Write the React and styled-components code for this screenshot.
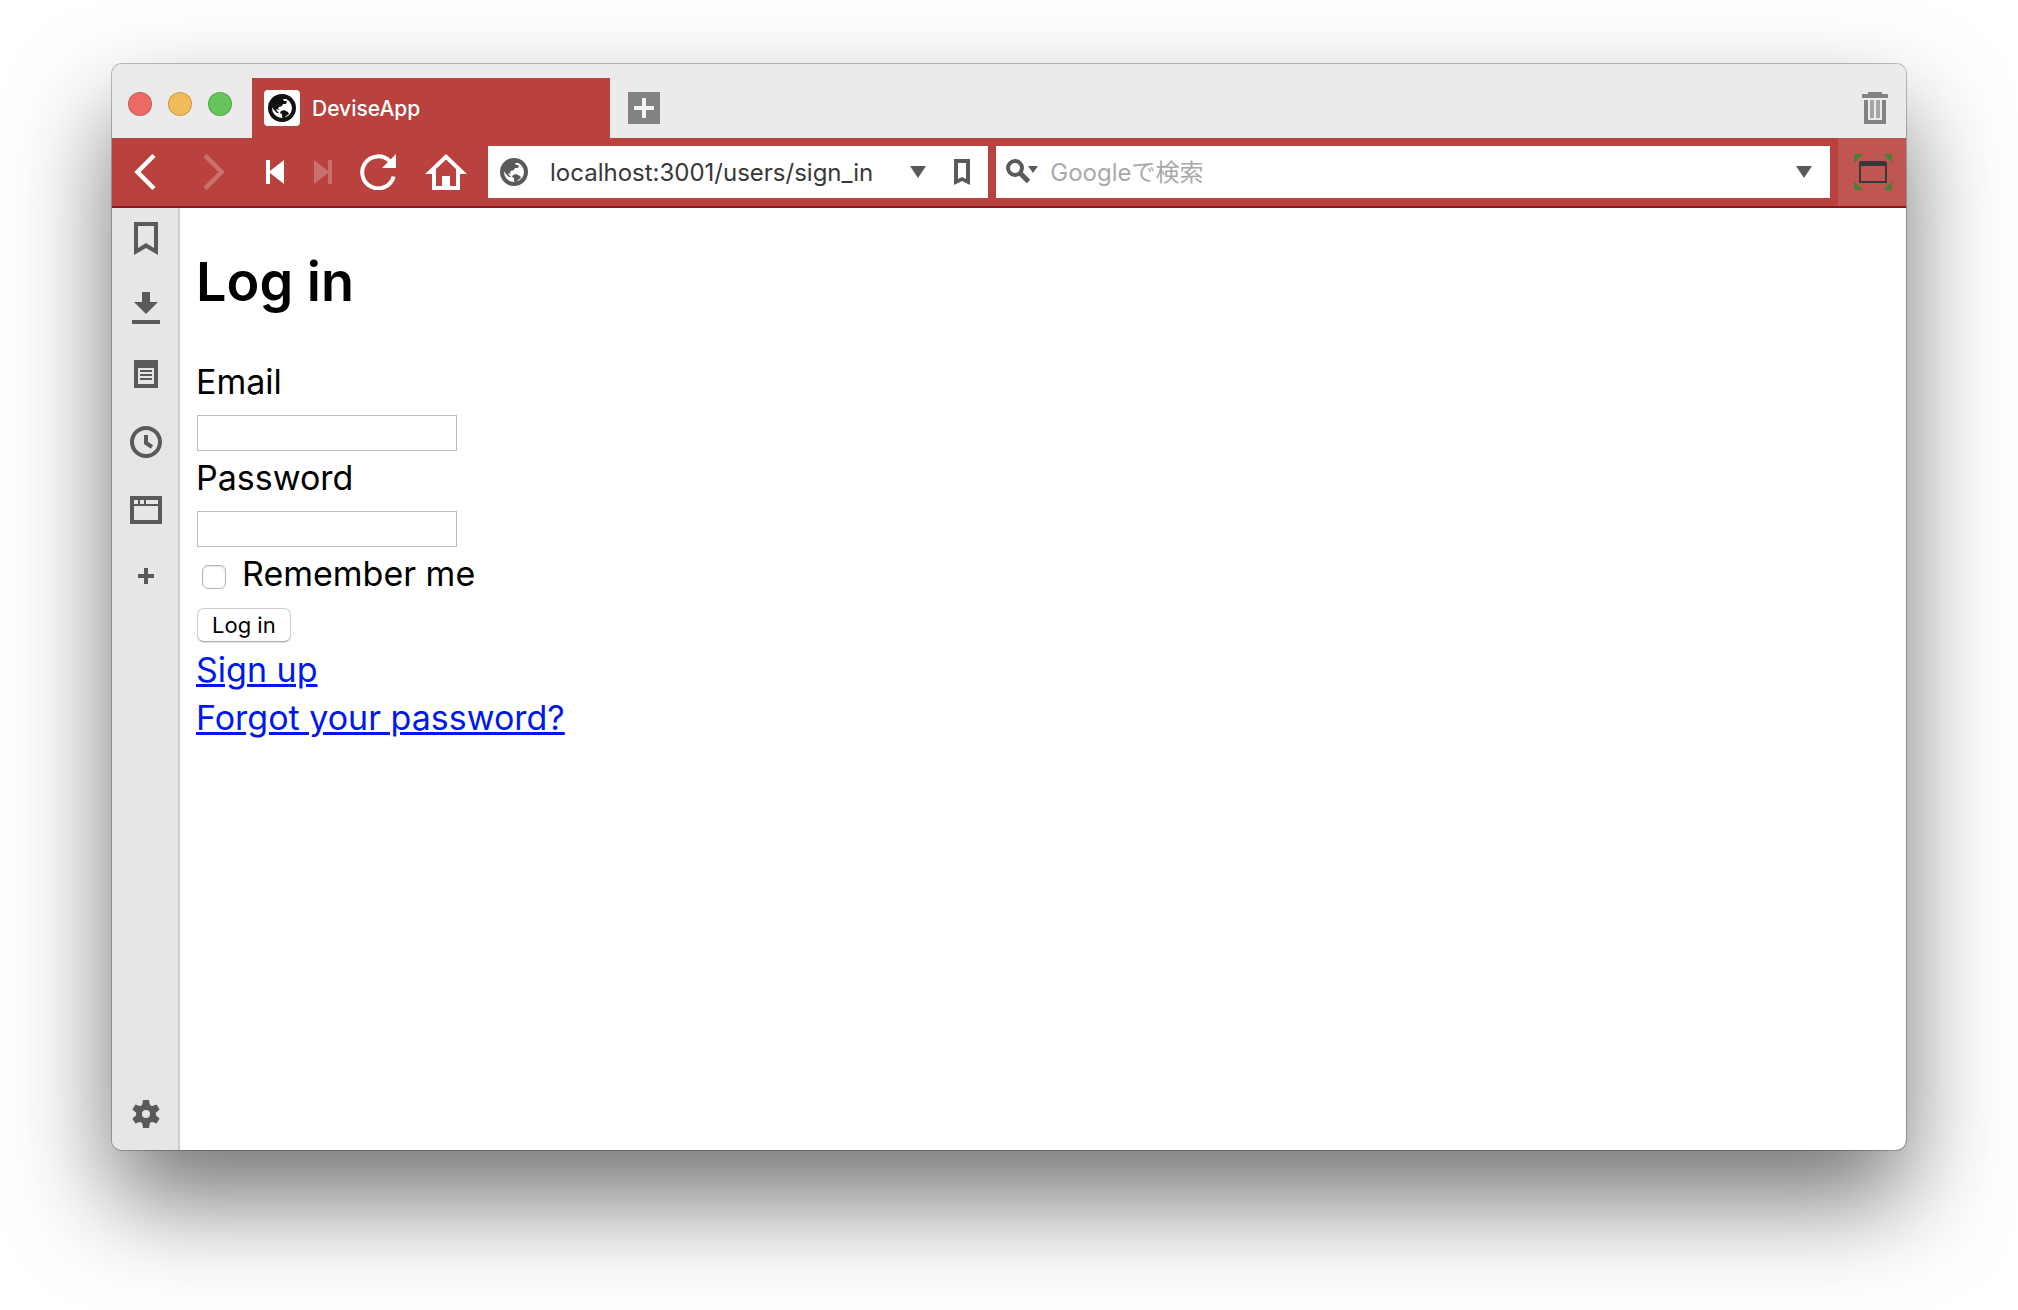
import React from "react";
import styled, { createGlobalStyle } from "styled-components";

const panels = [
  { name: "Bookmarks", type: "bookmark" },
  { name: "Downloads", type: "download" },
  { name: "Notes", type: "notes" },
  { name: "History", type: "history" },
  { name: "Window", type: "window" },
  { name: "Add web panel", type: "plus" },
];

const PanelIcon = ({ type }) => (
  <svg width="36" height="36" viewBox="0 0 36 36" fill="currentColor">
    {type === "bookmark" && (
      <path
        fillRule="evenodd"
        d="M6 2h24v33l-12-7-12 7zM10 6v22l8-5 8 5V6z"
      />
    )}
    {type === "download" && (
      <path d="M14 4h8v10h8L18 26 6 14h8zM4 32h28v4H4z" />
    )}
    {type === "notes" && (
      <path
        fillRule="evenodd"
        d="M6 4h24v28H6zM10 12v16h16V12zM12 14h12v2H12zM12 18h12v2H12zM12 22h12v2H12z"
      />
    )}
    {type === "history" && (
      <g fill="none" stroke="currentColor" strokeWidth="4">
        <circle cx="18" cy="18" r="14" />
        <path d="M18 11v8l6 4" />
      </g>
    )}
    {type === "window" && (
      <path
        fillRule="evenodd"
        d="M2 4h32v28H2zM6 8v4h4V8zM12 8v4h4V8zM18 8v4h12V8zM6 14v14h24V14z"
      />
    )}
    {type === "plus" && <path d="M16 8h4v6h6v4h-6v6h-4v-6h-6v-4h6z" />}
    {type === "gear" && (
      <g>
        {[0, 60, 120].map((angle) => (
          <path
            key={angle}
            d="M15 4h6l1 6v16l-1 6h-6l-1-6V10z"
            transform={`rotate(${angle} 18 18)`}
          />
        ))}
        <circle cx="18" cy="18" r="10" />
        <circle cx="18" cy="18" r="4" fill="#e6e6e6" />
      </g>
    )}
  </svg>
);

const Globe = ({ color }) => (
  <svg width="28" height="28" viewBox="0 0 28 28" fill={color}>
    <circle cx="14" cy="14" r="12" fill="none" stroke={color} strokeWidth="4" />
    <path d="M3 9L7 3l10 0 1 2-3 0 1 2 3 0-1 3-3 0-1 2-3 1-1 1 1 2-3-1 1 2 2 2-2 0-3-3-3-4z" />
    <path d="M13 17l3-1 4 2 1 2-3 2-2 3-2-2 0-3-2-1z" />
  </svg>
);

const App = () => {
  return (
    <Desktop>
      <GlobalStyle />
      <Window>
        <TabBar>
          <Lights>
            <Light type="button" aria-label="Close" $color="#e96b64" />
            <Light type="button" aria-label="Minimize" $color="#f0bb58" />
            <Light type="button" aria-label="Zoom" $color="#66c45b" />
          </Lights>
          <Tab type="button">
            <Favicon>
              <Globe color="#111" />
            </Favicon>
            DeviseApp
          </Tab>
          <NewTab type="button" aria-label="New tab">
            <svg width="32" height="32" viewBox="0 0 32 32">
              <path fill="#828282" d="M0 0h32v32H0z" />
              <path fill="#f4f4f4" d="M14 6h4v8h8v4h-8v8h-4v-8H6v-4h8z" />
            </svg>
          </NewTab>
          <Trash type="button" aria-label="Closed tabs">
            <svg width="26" height="32" viewBox="0 0 26 32">
              <path
                fill="#828282"
                d="M6 0h14v2h6v4H0V2h6zM2 8h4v20h14V8h4v24H2z"
              />
              <path fill="#a5a5a5" d="M8 8h4v18H8zM14 8h4v18h-4z" />
            </svg>
          </Trash>
        </TabBar>
        <Toolbar>
          <NavButtons>
            <NavButton type="button" aria-label="Back" $width={66}>
              <svg width="22" height="36" viewBox="0 0 22 36">
                <path
                  d="M20 1.500L3.500 18 20 34.500"
                  fill="none"
                  stroke="#fff"
                  strokeWidth="4.500"
                />
              </svg>
            </NavButton>
            <NavButton type="button" aria-label="Forward" $width={72} disabled>
              <svg width="22" height="36" viewBox="0 0 22 36">
                <path
                  d="M2 1.500L18.500 18 2 34.500"
                  fill="none"
                  stroke="#fff"
                  strokeWidth="4.500"
                />
              </svg>
            </NavButton>
            <NavButton type="button" aria-label="Rewind" $width={50}>
              <svg width="18" height="24" viewBox="0 0 18 24" fill="#fff">
                <path d="M0 0h4v11L18 0v24L4 13v11H0z" />
              </svg>
            </NavButton>
            <NavButton
              type="button"
              aria-label="Fast forward"
              $width={46}
              disabled
            >
              <svg width="18" height="24" viewBox="0 0 18 24" fill="#fff">
                <path d="M18 0h-4v11L0 0v24l14-11v11h4z" />
              </svg>
            </NavButton>
            <NavButton type="button" aria-label="Reload" $width={64}>
              <svg width="36" height="36" viewBox="0 0 36 36">
                <path
                  d="M33.700 22.500A16 16 0 1 1 30 7.500"
                  fill="none"
                  stroke="#fff"
                  strokeWidth="4"
                />
                <path d="M36 0v14H22z" fill="#fff" />
              </svg>
            </NavButton>
            <NavButton type="button" aria-label="Home" $width={72}>
              <svg width="42" height="36" viewBox="0 0 42 36">
                <path
                  fillRule="evenodd"
                  fill="#fff"
                  d="M21 0l21 20h-7v16H7V20H0zM21 5.500L11 15v17h6V22h8v10h6V15z"
                />
              </svg>
            </NavButton>
          </NavButtons>
          <AddressField>
            <SiteInfo type="button" aria-label="Site information">
              <Globe color="#5a5a5a" />
            </SiteInfo>
            <FieldInput
              type="text"
              aria-label="Address"
              defaultValue="localhost:3001/users/sign_in"
            />
            <FieldButton type="button" aria-label="Show history">
              <Arrow />
            </FieldButton>
            <FieldButton type="button" aria-label="Bookmark page">
              <svg width="16" height="26" viewBox="0 0 16 26">
                <path
                  fillRule="evenodd"
                  fill="#5a5a5a"
                  d="M0 0h16v26l-8-4-8 4zM4 4v16l4-2 4 2V4z"
                />
              </svg>
            </FieldButton>
          </AddressField>
          <SearchField>
            <EngineButton type="button" aria-label="Select search engine">
              <svg width="32" height="26" viewBox="0 0 32 26">
                <g fill="none" stroke="#5a5a5a">
                  <circle cx="9" cy="9" r="7" strokeWidth="4" />
                  <path d="M14 14l8.500 8.500" strokeWidth="5" />
                </g>
                <path d="M22 7h10l-5 7z" fill="#5a5a5a" />
              </svg>
            </EngineButton>
            <FieldInput
              type="text"
              aria-label="Search"
              placeholder="Googleで検索"
            />
            <FieldButton type="button" aria-label="Search history">
              <Arrow />
            </FieldButton>
          </SearchField>
          <ExtensionButton type="button" aria-label="Resize window">
            <svg width="38" height="36" viewBox="0 0 38 36">
              <path
                fill="#4c7f35"
                d="M0 0h9L0 9zM38 0v9l-9-9zM0 36v-9l9 9zM38 36h-9l9-9z"
              />
              <path
                fill="#383838"
                fillRule="evenodd"
                d="M7 7h24a2 2 0 0 1 2 2v20H5V9a2 2 0 0 1 2-2zM7 12v15h24V12z"
              />
            </svg>
          </ExtensionButton>
        </Toolbar>
        <Body>
          <Sidebar>
            {panels.map((panel) => (
              <PanelButton
                type="button"
                key={panel.name}
                aria-label={panel.name}
              >
                <PanelIcon type={panel.type} />
              </PanelButton>
            ))}
            <SettingsButton type="button" aria-label="Settings">
              <PanelIcon type="gear" />
            </SettingsButton>
          </Sidebar>
          <Page>
            <Title>Log in</Title>
            <form onSubmit={(e) => e.preventDefault()}>
              <Row>
                <label htmlFor="email">Email</label>
              </Row>
              <Row>
                <TextInput id="email" type="email" />
              </Row>
              <Row>
                <label htmlFor="password">Password</label>
              </Row>
              <Row>
                <TextInput id="password" type="password" />
              </Row>
              <Row>
                <Checkbox id="remember" type="checkbox" />
                <label htmlFor="remember">Remember me</label>
              </Row>
              <Row>
                <Submit type="submit">Log in</Submit>
              </Row>
            </form>
            <Row>
              <Link href="#sign_up">Sign up</Link>
            </Row>
            <Row>
              <Link href="#password">Forgot your password?</Link>
            </Row>
          </Page>
        </Body>
      </Window>
    </Desktop>
  );
};

export default App;

const GlobalStyle = createGlobalStyle`
  * {
    box-sizing: border-box;
  }
  body {
    margin: 0;
    background-color: white;
    font-family: Inter, "Noto Sans CJK JP", sans-serif;
  }
  button {
    border: none;
    padding: 0;
    background: none;
    font-family: inherit;
    cursor: pointer;
  }
  svg {
    display: block;
    flex-shrink: 0;
  }
`;

const Desktop = styled.div`
  min-height: 100vh;
  display: flex;
  padding: 64px 112px 160px;
  overflow: hidden;
`;

const Window = styled.div`
  flex: 1;
  min-width: 0;
  display: flex;
  flex-direction: column;
  border-radius: 10px;
  overflow: hidden;
  background-color: white;
  box-shadow: 0 0 0 1px rgba(0, 0, 0, 0.25), 0 50px 100px rgba(0, 0, 0, 0.55);
`;

const TabBar = styled.div`
  height: 74px;
  display: flex;
  align-items: flex-end;
  padding: 0 18px 0 16px;
  background-color: #ebebeb;
`;

const Lights = styled.div`
  display: flex;
  gap: 16px;
  width: 124px;
  padding-bottom: 22px;
`;

const Light = styled.button`
  width: 24px;
  height: 24px;
  border-radius: 50%;
  background-color: ${({ $color }) => $color};
  box-shadow: inset 0 0 0 1px rgba(0, 0, 0, 0.15);
`;

const Tab = styled.button`
  width: 358px;
  height: 60px;
  display: flex;
  align-items: center;
  gap: 12px;
  padding: 0 12px;
  background-color: #b9423e;
  color: white;
  font-size: 21px;
  font-weight: 500;
`;

const Favicon = styled.span`
  width: 36px;
  height: 36px;
  display: flex;
  align-items: center;
  justify-content: center;
  border-radius: 4px;
  background-color: white;
`;

const NewTab = styled.button`
  margin: 0 auto 14px 18px;
`;

const Trash = styled.button`
  margin-bottom: 14px;
`;

const Toolbar = styled.div`
  height: 70px;
  display: flex;
  background-color: #b9423e;
  border-bottom: 2px solid #8a171a;
`;

const NavButtons = styled.div`
  display: flex;
  padding-right: 6px;
`;

const NavButton = styled.button`
  width: ${({ $width }) => $width}px;
  display: flex;
  align-items: center;
  justify-content: center;
  &:disabled {
    opacity: 0.25;
  }
`;

const AddressField = styled.div`
  flex: 3 1 0;
  min-width: 0;
  display: flex;
  align-items: center;
  margin: 8px 8px 8px 0;
  background-color: white;
`;

const SearchField = styled(AddressField)`
  flex: 5 1 0;
`;

const FieldInput = styled.input`
  flex: 1;
  min-width: 0;
  height: 100%;
  border: none;
  outline: none;
  padding: 0;
  background: none;
  color: #383838;
  font-family: inherit;
  font-size: 24px;
  &::placeholder {
    color: #a9a9a9;
    opacity: 1;
  }
`;

const FieldButton = styled.button`
  display: flex;
  align-items: center;
  margin: 0 18px 0 10px;
`;

const SiteInfo = styled(FieldButton)`
  margin: 0 22px 0 12px;
`;

const EngineButton = styled(FieldButton)`
  margin: 0 12px 0 10px;
`;

const Arrow = styled.span`
  border: 8px solid transparent;
  border-top: 12px solid #5a5a5a;
  border-bottom: none;
`;

const ExtensionButton = styled.button`
  width: 68px;
  display: flex;
  align-items: center;
  justify-content: center;
  padding-left: 2px;
  background-color: #c05651;
`;

const Body = styled.div`
  flex: 1;
  display: flex;
`;

const Sidebar = styled.div`
  width: 68px;
  display: flex;
  flex-direction: column;
  align-items: center;
  gap: 32px;
  padding: 12px 0 18px 2px;
  border-right: 2px solid #ccc;
  background-color: #e6e6e6;
  color: #5a5a5a;
`;

const PanelButton = styled.button`
  color: inherit;
`;

const SettingsButton = styled(PanelButton)`
  margin-top: auto;
`;

const Page = styled.main`
  flex: 1;
  padding: 0 16px;
  color: black;
  font-size: 34px;
`;

const Title = styled.h2`
  margin: 38px 0 42px;
  font-size: 54px;
  font-weight: 600;
  line-height: 72px;
`;

const Row = styled.div`
  height: 48px;
  display: flex;
  align-items: center;
  line-height: 44px;
  label,
  a {
    height: 48px;
  }
`;

const TextInput = styled.input`
  width: 260px;
  height: 36px;
  margin: 2px 1px 0;
  border: 1px solid #bdbdbd;
  padding: 2px 4px;
  background-color: white;
  font-family: inherit;
  font-size: 22px;
`;

const Checkbox = styled.input`
  appearance: none;
  width: 24px;
  height: 24px;
  margin: 2px 16px 0 6px;
  border: 1px solid #b5b5b5;
  border-radius: 6px;
  background-color: white;
  box-shadow: inset 0 1px 2px rgba(0, 0, 0, 0.12);
`;

const Submit = styled.button`
  height: 34px;
  margin: 2px 1px 0;
  border: 1px solid #cecece;
  border-bottom-color: #b0b0b0;
  border-radius: 7px;
  padding: 0 14px;
  background-color: white;
  box-shadow: 0 1px 1px rgba(0, 0, 0, 0.12);
  color: black;
  font-size: 22px;
`;

const Link = styled.a`
  color: #0018ee;
  text-decoration: underline;
`;
